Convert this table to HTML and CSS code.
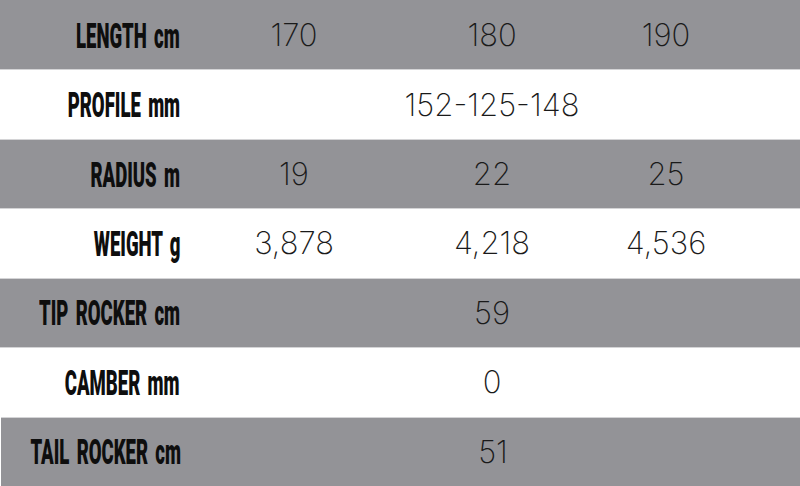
FILE: index.html
```html
<!DOCTYPE html>
<html>
<head>
<meta charset="utf-8">
<link rel="stylesheet" href="styles.css">
</head>
<body>
<div class="specs">
  <div class="row gray">
    <div class="label"><span>LENGTH <i>cm</i></span></div>
    <div class="val c1">170</div>
    <div class="val c2">180</div>
    <div class="val c3">190</div>
  </div>
  <div class="row white">
    <div class="label"><span>PROFILE <i>mm</i></span></div>
    <div class="val c2">152-125-148</div>
  </div>
  <div class="row gray">
    <div class="label"><span>RADIUS <i>m</i></span></div>
    <div class="val c1">19</div>
    <div class="val c2">22</div>
    <div class="val c3">25</div>
  </div>
  <div class="row white">
    <div class="label"><span>WEIGHT <i>g</i></span></div>
    <div class="val c1">3,878</div>
    <div class="val c2">4,218</div>
    <div class="val c3">4,536</div>
  </div>
  <div class="row gray">
    <div class="label"><span>TIP ROCKER <i>cm</i></span></div>
    <div class="val c2">59</div>
  </div>
  <div class="row white">
    <div class="label"><span>CAMBER <i>mm</i></span></div>
    <div class="val c2">0</div>
  </div>
  <div class="row gray last">
    <div class="label"><span>TAIL ROCKER <i>cm</i></span></div>
    <div class="val c2">51</div>
  </div>
</div>
</body>
</html>
```
FILE: styles.css
```css
html, body {
  margin: 0;
  padding: 0;
  background: #ffffff;
}
.specs {
  width: 800px;
  height: 486px;
  display: grid;
  grid-template-rows: repeat(7, 1fr);
}
.row {
  display: grid;
  grid-template-columns: 196px 196px 200px 148px 1fr;
  align-items: center;
}
.gray {
  background: #939397;
}
.white {
  background: #ffffff;
}
.gray + .white, .white + .gray {
  box-shadow: inset 0 1px 0 #d4d4d6;
}
.last {
  margin-left: 1px;
}
.label {
  grid-column: 1;
  justify-self: end;
  padding-right: 16px;
  display: flex;
}
.label span {
  display: inline-block;
  font-family: Roboto, "Liberation Sans", sans-serif;
  font-weight: 900;
  font-size: 35px;
  line-height: 1;
  color: #0e0e0e;
  letter-spacing: 0;
  word-spacing: 5px;
  white-space: nowrap;
  transform: scaleX(0.53);
  transform-origin: right center;
  margin-top: 3px;
}
.label i {
  font-style: normal;
}
.val {
  font-family: Inter, "Open Sans", sans-serif;
  font-weight: 200;
  font-size: 31px;
  line-height: 1;
  color: #1a1a1a;
  text-align: center;
  white-space: nowrap;
}
.c1 { grid-column: 2; }
.c2 { grid-column: 3; }
.c3 { grid-column: 4; }
```
